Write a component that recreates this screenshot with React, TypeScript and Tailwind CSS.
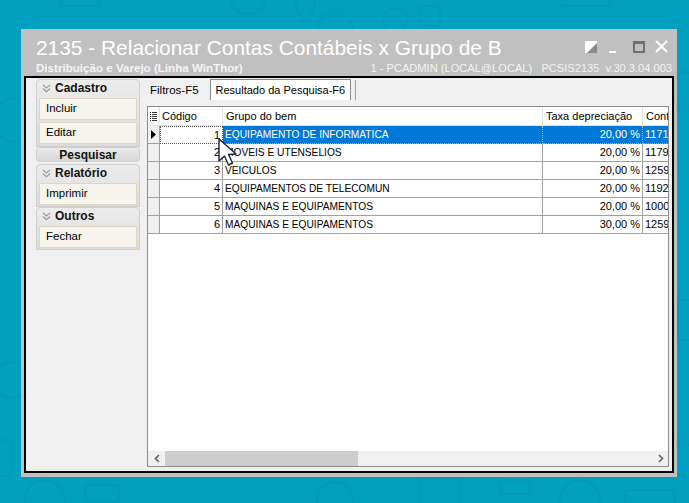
import React from "react";

const rows = [
  { id: 1, grupo: "EQUIPAMENTO DE INFORMATICA", taxa: "20,00 %", conta: "1171" },
  { id: 2, grupo: "MOVEIS E UTENSELIOS", taxa: "20,00 %", conta: "1179" },
  { id: 3, grupo: "VEICULOS", taxa: "20,00 %", conta: "1259" },
  { id: 4, grupo: "EQUIPAMENTOS DE TELECOMUN", taxa: "20,00 %", conta: "1192" },
  { id: 5, grupo: "MAQUINAS E EQUIPAMENTOS", taxa: "20,00 %", conta: "1000" },
  { id: 6, grupo: "MAQUINAS E EQUIPAMENTOS", taxa: "30,00 %", conta: "1259" },
];

function Chevrons() {
  return (
    <svg viewBox="0 0 10 10" className="w-[9px] h-[9px]" fill="none" stroke="#9a9a9a" strokeWidth="1.3">
      <path d="M1 1l4 3.5 4-3.5" />
      <path d="M1 5l4 3.5 4-3.5" />
    </svg>
  );
}

function SideButton({ label }: { label: string }) {
  return (
    <div className="mx-[2px] h-[22px] bg-[#f6f4ec] border border-[#dcd7bd] flex items-center pl-[6px] text-[11.5px] text-black">
      {label}
    </div>
  );
}

function GroupHeader({ label, chevron = true }: { label: string; chevron?: boolean }) {
  return (
    <div
      className={
        "flex items-center gap-[4px] font-bold text-[12px] text-[#111] " +
        (chevron ? "h-[16px] pl-[5px]" : "h-[13px] justify-center")
      }
    >
      {chevron && <Chevrons />}
      <span>{label}</span>
    </div>
  );
}

function Background() {
  return (
    <svg className="absolute inset-0" width="689" height="503" fill="none" stroke="#0a93b1" strokeWidth="2" opacity="0.5">
      <rect x="60" y="-10" width="40" height="16" rx="3" />
      <circle cx="248" cy="-4" r="18" />
      <path d="M295 -5c0 20 10 28 10 28s10-8 10-28" />
      <circle cx="335" cy="30" r="18" />
      <rect x="420" y="6" width="20" height="20" rx="3" />
      <circle cx="395" cy="20" r="12" />
      <rect x="560" y="-8" width="50" height="14" rx="3" />
      <circle cx="15" cy="120" r="22" />
      <circle cx="12" cy="380" r="18" />
      <rect x="-6" y="440" width="18" height="36" rx="3" />
      <circle cx="45" cy="500" r="20" />
      <rect x="85" y="485" width="34" height="16" rx="3" />
      <circle cx="335" cy="500" r="18" />
      <rect x="420" y="478" width="40" height="30" rx="3" />
      <rect x="500" y="480" width="30" height="14" rx="3" />
      <circle cx="580" cy="500" r="20" />
      <rect x="625" y="490" width="50" height="20" rx="3" />
      <circle cx="685" cy="90" r="18" />
      <rect x="678" y="300" width="20" height="40" rx="3" />
      <circle cx="684" cy="460" r="16" />
    </svg>
  );
}

function Cursor() {
  return (
    <svg className="absolute left-[217px] top-[138px]" width="24" height="30" viewBox="0 0 24 30">
      <path
        d="M2 1v22l5.5-5 4 9 4-2-4-8.5 7.5-.5z"
        fill="#ffffff"
        stroke="#1c2340"
        strokeWidth="1.4"
        strokeLinejoin="round"
      />
    </svg>
  );
}

const selCell = "bg-[#0078d7] text-white border-[#e8a060] border-dotted";

export default function App() {
  return (
    <div
      className="relative w-[689px] h-[503px] overflow-hidden bg-[#01a0c1]"
      style={{ fontFamily: '"Liberation Sans", Arial, sans-serif' }}
    >
      <Background />
      <div className="relative ml-[21px] mt-[29px] w-[656px] h-[448px] bg-[#c0c0c0] flex flex-col">
        {/* title */}
        <div className="h-[31px] flex items-end justify-between pl-[15px] pr-[9px]">
          <div className="text-[20.9px] leading-[24px] text-white">
            2135 - Relacionar Contas Contábeis x Grupo de B
          </div>
          <div className="flex items-center mb-[7px]">
            <svg width="12" height="12" viewBox="0 0 12 12">
              <rect x="0" y="0" width="12" height="12" fill="#ffffff" />
              <path d="M12 2v10H2z" fill="#8a8a8a" />
            </svg>
            <div className="ml-[12px] w-[7px] h-[2px] bg-white mt-[10px]" />
            <div className="ml-[17px] w-[12px] h-[12px] border-[2px] border-t-[3px] border-[#707070]" />
            <svg className="ml-[10px]" width="13" height="13" viewBox="0 0 13 13" stroke="#ffffff" strokeWidth="2">
              <path d="M1 1l11 11M12 1L1 12" />
            </svg>
          </div>
        </div>
        <div className="h-[16px] flex items-center justify-between pl-[15px] pr-[5px] text-[#f4f4f4]">
          <span className="font-bold text-[11.6px]">Distribuição e Varejo (Linha WinThor)</span>
          <span className="text-[11.1px]">
            1 - PCADMIN (LOCAL@LOCAL)&nbsp;&nbsp;&nbsp;PCSIS2135&nbsp;&nbsp;v.30.3.04.003
          </span>
        </div>

        {/* content */}
        <div className="mx-[3px] mb-[4px] flex-1 border-[2px] border-black bg-[#f0f0f0] flex pt-[1px] pl-[10px] pr-[3px] pb-[4px] text-[11px] text-black">
          {/* sidebar */}
          <div className="w-[104px] shrink-0 flex flex-col">
            <div className="rounded-t-[4px] border border-[#cfcfcf] bg-gradient-to-b from-[#ececec] to-[#dcdcdc] pb-[2px] flex flex-col gap-[2px]">
              <GroupHeader label="Cadastro" />
              <SideButton label="Incluir" />
              <SideButton label="Editar" />
            </div>
            <div className="rounded-[4px] border border-[#cfcfcf] bg-gradient-to-b from-[#ececec] to-[#d6d6d6]">
              <GroupHeader label="Pesquisar" chevron={false} />
            </div>
            <div className="mt-[2px] rounded-t-[4px] border border-[#cfcfcf] bg-gradient-to-b from-[#ececec] to-[#dcdcdc] pb-[1px] flex flex-col gap-[2px]">
              <GroupHeader label="Relatório" />
              <SideButton label="Imprimir" />
            </div>
            <div className="rounded-t-[4px] border border-[#cfcfcf] bg-gradient-to-b from-[#ececec] to-[#dcdcdc] pb-[1px] flex flex-col gap-[2px]">
              <GroupHeader label="Outros" />
              <SideButton label="Fechar" />
            </div>
          </div>

          {/* main */}
          <div className="flex-1 min-w-0 ml-[7px] flex flex-col">
            <div className="h-[21px] flex items-end">
              <div className="h-[19px] px-[3px] flex items-center text-[11.5px]">Filtros-F5</div>
              <div className="ml-[8px] h-[21px] px-[5px] flex items-center bg-white border border-[#8a8a8a] border-b-0 text-[11px]">
                Resultado da Pesquisa-F6
              </div>
              <div className="w-px h-[20px] bg-[#a0a0a0] ml-[4px]" />
            </div>
            <div className="mt-[6px] flex-1 border border-[#8c8c8c] bg-white flex flex-col overflow-hidden">
              {/* header */}
              <div className="h-[19px] shrink-0 flex border-b border-[#e0e0e0] whitespace-nowrap">
                <div className="w-[12px] shrink-0 border-r border-[#e6e6e6] flex items-center justify-center">
                  <svg width="7" height="9" viewBox="0 0 7 9" fill="#333">
                    <rect x="0" y="0" width="1" height="1" />
                    <rect x="2" y="0" width="5" height="1" />
                    <rect x="0" y="2" width="1" height="1" />
                    <rect x="2" y="2" width="5" height="1" />
                    <rect x="0" y="4" width="1" height="1" />
                    <rect x="2" y="4" width="5" height="1" />
                    <rect x="0" y="6" width="1" height="1" />
                    <rect x="2" y="6" width="5" height="1" />
                    <rect x="0" y="8" width="1" height="1" />
                    <rect x="2" y="8" width="5" height="1" />
                  </svg>
                </div>
                <div className="w-[63px] shrink-0 px-[2px] flex items-center border-r border-[#e6e6e6]">Código</div>
                <div className="w-[320px] shrink-0 px-[3px] flex items-center border-r border-[#e6e6e6]">Grupo do bem</div>
                <div className="w-[100px] shrink-0 px-[3px] flex items-center border-r border-[#e6e6e6]">Taxa depreciação</div>
                <div className="w-[60px] shrink-0 px-[3px] flex items-center">Conta</div>
              </div>
              {/* rows */}
              {rows.map((r, i) => {
                const sel = i === 0;
                return (
                  <div key={r.id} className="h-[18px] shrink-0 flex text-[10.2px] whitespace-nowrap">
                    <div className="w-[12px] shrink-0 bg-[#f0f0f0] border-r border-b border-[#a0a0a0] flex items-center pl-[3px]">
                      {sel && (
                        <svg width="5" height="9" viewBox="0 0 5 9">
                          <path d="M0 0l5 4.5L0 9z" fill="#000" />
                        </svg>
                      )}
                    </div>
                    <div
                      className={
                        "w-[63px] shrink-0 pr-[2px] flex items-center justify-end border-r border-b text-[11px] " +
                        (sel ? "border-dotted border-[#555] border-l border-t" : "border-[#a0a0a0]")
                      }
                    >
                      {r.id}
                    </div>
                    <div
                      className={
                        "w-[320px] shrink-0 px-[2px] flex items-center border-r border-b " +
                        (sel ? selCell : "border-[#a0a0a0]")
                      }
                    >
                      {r.grupo}
                    </div>
                    <div
                      className={
                        "w-[100px] shrink-0 pr-[2px] flex items-center justify-end border-r border-b text-[11px] " +
                        (sel ? selCell : "border-[#a0a0a0]")
                      }
                    >
                      {r.taxa}
                    </div>
                    <div
                      className={
                        "w-[60px] shrink-0 pl-[2px] flex items-center border-b text-[11px] " +
                        (sel ? selCell : "border-[#a0a0a0]")
                      }
                    >
                      {r.conta}
                    </div>
                  </div>
                );
              })}
              <div className="flex-1" />
              {/* scrollbar */}
              <div className="h-[15px] shrink-0 flex bg-[#f0f0f0]">
                <div className="w-[17px] flex items-center justify-center">
                  <svg width="6" height="9" viewBox="0 0 6 9" fill="none" stroke="#606060" strokeWidth="1.6">
                    <path d="M5 1L1.5 4.5 5 8" />
                  </svg>
                </div>
                <div className="w-[193px] bg-[#cdcdcd]" />
                <div className="flex-1" />
                <div className="w-[15px] flex items-center justify-center">
                  <svg width="6" height="9" viewBox="0 0 6 9" fill="none" stroke="#606060" strokeWidth="1.6">
                    <path d="M1 1l3.5 3.5L1 8" />
                  </svg>
                </div>
              </div>
            </div>
          </div>
        </div>
      </div>
      <Cursor />
    </div>
  );
}
